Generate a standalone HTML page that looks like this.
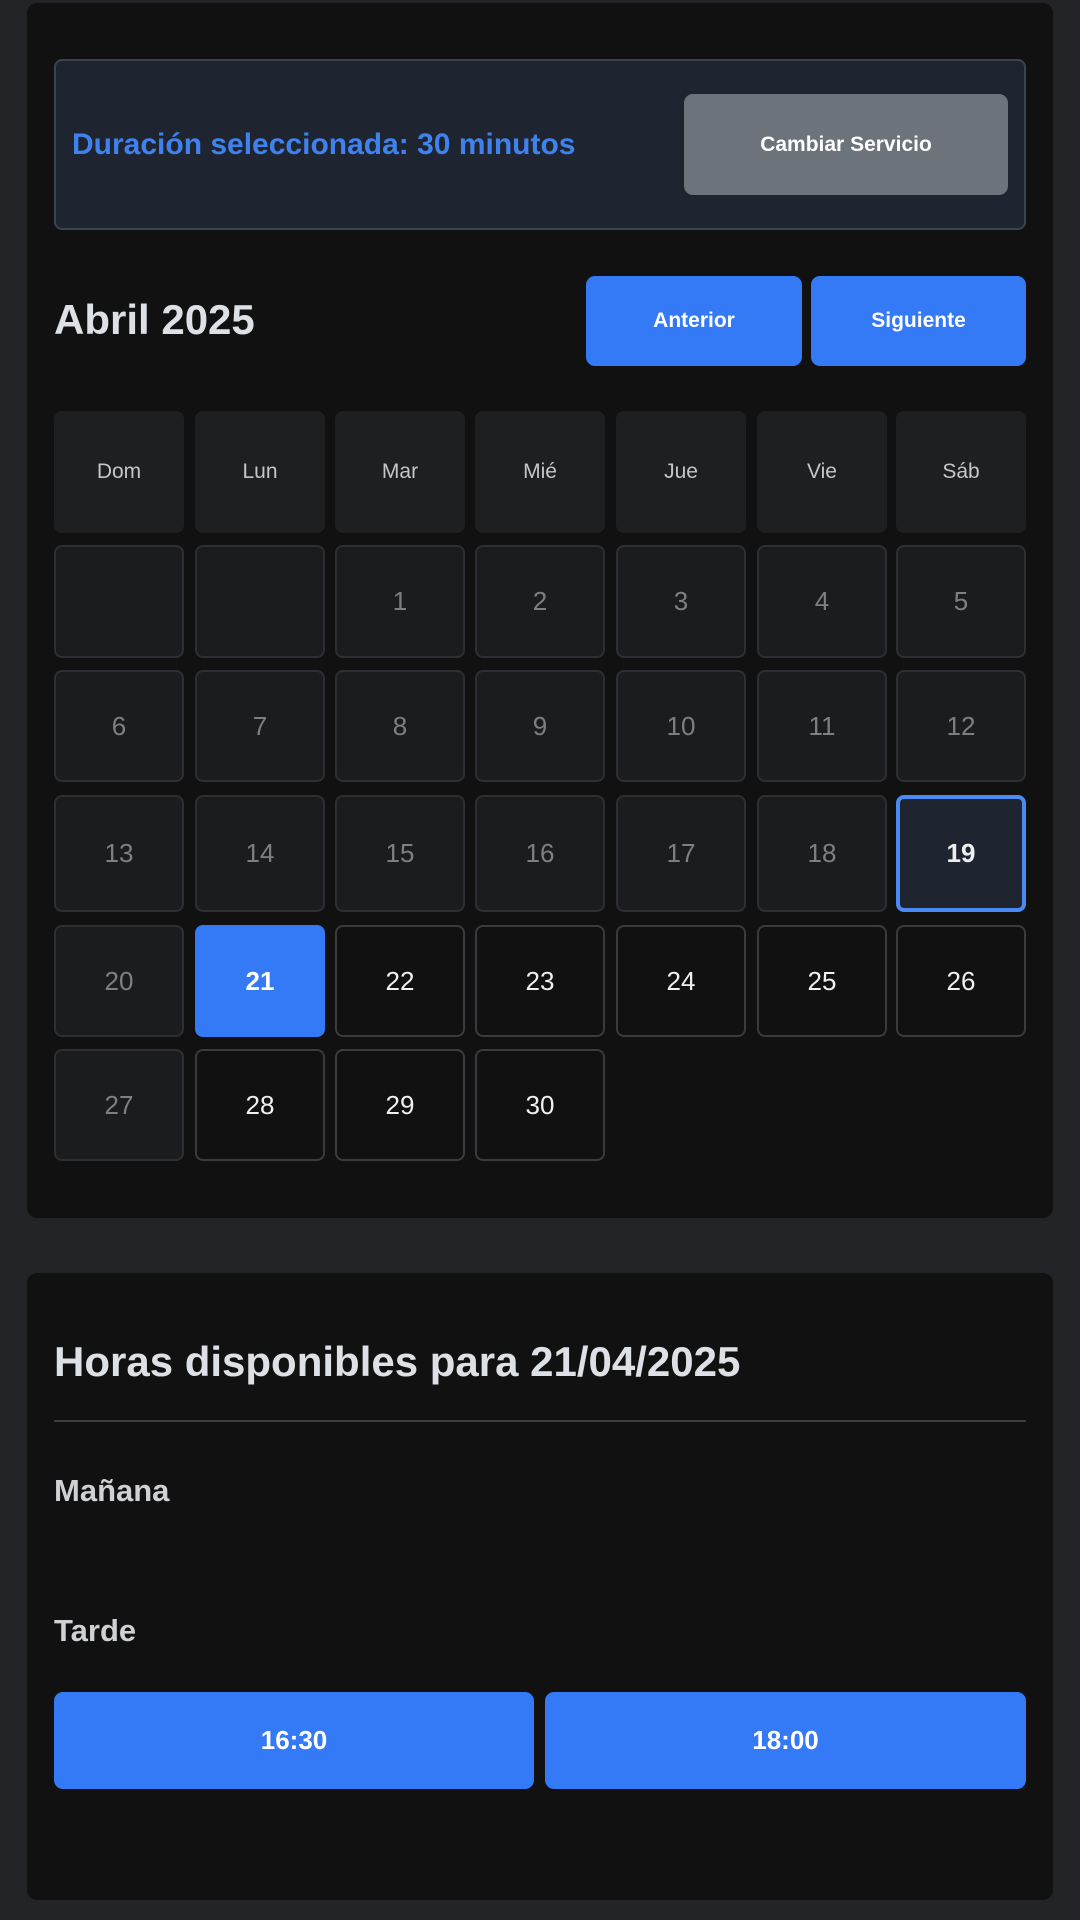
<!DOCTYPE html>
<html><head><meta charset="utf-8"><style>
*{margin:0;padding:0;box-sizing:border-box}
body{width:1080px;height:1920px;background:#232427;font-family:"Liberation Sans",sans-serif;position:relative;overflow:hidden}
.a{position:absolute}
.card{background:#111111;border-radius:10px}
.c{display:flex;align-items:center;justify-content:center}
.h{background:#1e1f21;border-radius:8px;color:#c4c6c9;font-size:21px}
.d{border-radius:8px;font-size:26px}
.p{background:#1b1c1e;border:2px solid #2e2f32;color:#7d8083}
.f{background:#111;border:2px solid #3a3b3e;color:#f0f0f0}
.btn{background:#3479f5;border-radius:9px;color:#fff;font-weight:bold}
</style></head><body>
<div class="a card" style="left:27px;top:3px;width:1026px;height:1215px"></div>
<div class="a" style="left:54px;top:59px;width:972px;height:171px;background:#1f2530;border:2px solid #3b4350;border-radius:8px"></div>
<div class="a" style="left:72px;top:128px;font-size:30px;font-weight:bold;color:#3f82ee;white-space:nowrap">Duración seleccionada: 30 minutos</div>
<div class="a c" style="left:684px;top:94px;width:324px;height:101px;background:#6d737b;border-radius:9px;color:#fff;font-size:21px;font-weight:bold">Cambiar Servicio</div>
<div class="a" style="left:54px;top:296px;font-size:42px;font-weight:bold;color:#dde0e5">Abril 2025</div>
<div class="a c btn" style="left:586px;top:276px;width:216px;height:90px;font-size:21px">Anterior</div>
<div class="a c btn" style="left:811px;top:276px;width:215px;height:90px;font-size:21px">Siguiente</div>

<div id="g"></div>

<div class="a card" style="left:27px;top:1273px;width:1026px;height:627px"></div>
<div class="a" style="left:54px;top:1338px;font-size:42px;font-weight:bold;color:#dde0e5;white-space:nowrap">Horas disponibles para 21/04/2025</div>
<div class="a" style="left:54px;top:1420px;width:972px;height:2px;background:#3d3e41"></div>
<div class="a" style="left:54px;top:1473px;font-size:31px;font-weight:bold;color:#cfd1d4">Mañana</div>
<div class="a" style="left:54px;top:1613px;font-size:31px;font-weight:bold;color:#cfd1d4">Tarde</div>
<div class="a c btn" style="left:54px;top:1692px;width:480px;height:97px;font-size:26px">16:30</div>
<div class="a c btn" style="left:545px;top:1692px;width:481px;height:97px;font-size:26px">18:00</div>

<script>
var xs=[54,195,335,475,616,757,896],w=130;
var names=["Dom","Lun","Mar","Mié","Jue","Vie","Sáb"];
var rows=[[545,113],[670,112],[795,117],[925,112],[1049,112]];
var h="";
for(var i=0;i<7;i++)h+='<div class="a c h" style="left:'+xs[i]+'px;top:411px;width:'+w+'px;height:122px">'+names[i]+'</div>';
for(var r=0;r<5;r++)for(var c=0;c<7;c++){
 var n=r*7+c-1;
 if(n>30)continue;
 var y=rows[r][0],hh=rows[r][1],st='left:'+xs[c]+'px;top:'+y+'px;width:'+w+'px;height:'+hh+'px';
 var cls,txt=n>=1?n:'';
 if(n==19){h+='<div class="a c d" style="'+st+';background:#1f2530;border:4px solid #4a8af2;color:#eee;font-weight:bold">19</div>';continue;}
 if(n==21){h+='<div class="a c d" style="'+st+';background:#3479f5;color:#fff;font-weight:bold">21</div>';continue;}
 cls=(n<21)?'p':(c==0?'p':'f');
 h+='<div class="a c d '+cls+'" style="'+st+'">'+txt+'</div>';
}
document.getElementById('g').innerHTML=h;
</script>
</body></html>
